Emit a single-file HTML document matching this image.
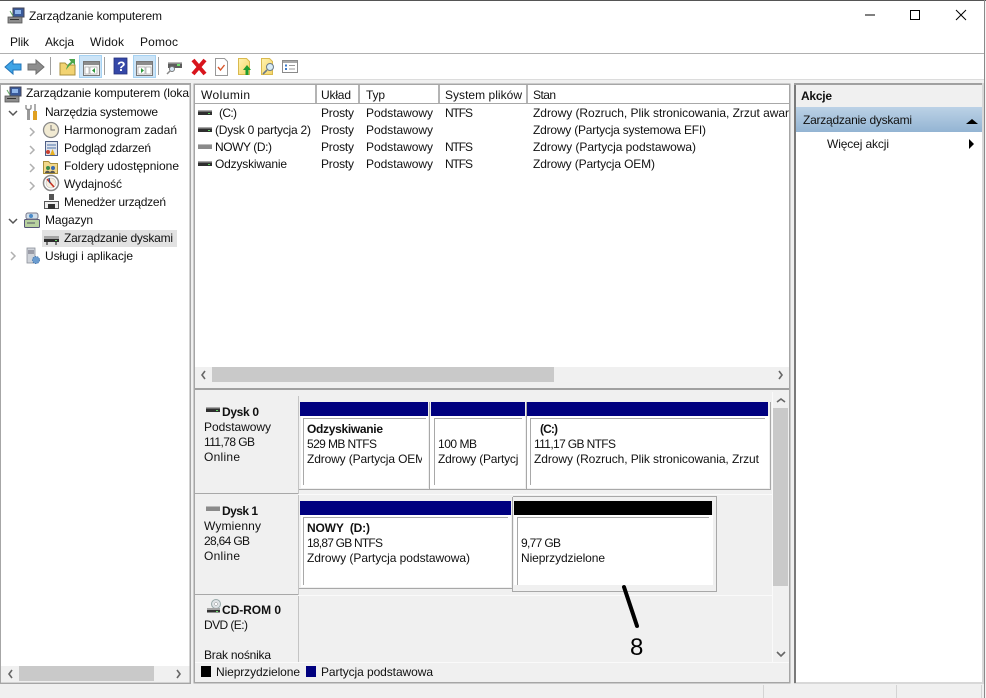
<!DOCTYPE html>
<html lang="pl"><head><meta charset="utf-8"><title>Zarządzanie komputerem</title>
<style>
html,body{margin:0;padding:0;background:#f0f0f0;width:986px;height:698px;overflow:hidden}
svg{display:block}
text{font-family:"Liberation Sans",sans-serif;font-size:12px;fill:#111;white-space:pre}
.b{font-weight:bold}
</style></head><body>
<svg width="986" height="698" viewBox="0 0 986 698" xmlns="http://www.w3.org/2000/svg">
<defs>
<linearGradient id="band" x1="0" y1="0" x2="0" y2="1"><stop offset="0" stop-color="#bcd2e6"/><stop offset="1" stop-color="#93b4d3"/></linearGradient>
<linearGradient id="yel" x1="0" y1="0" x2="1" y2="1"><stop offset="0" stop-color="#fff3b0"/><stop offset="1" stop-color="#f5d468"/></linearGradient>
<clipPath id="c1"><rect x="300" y="440" width="122" height="40"/></clipPath>
<clipPath id="c2"><rect x="432" y="440" width="86" height="40"/></clipPath>
<clipPath id="c3"><rect x="530" y="100" width="259" height="30"/></clipPath>
<g id="disk"><rect x="0" y="0" width="14" height="1.500" fill="#a8a8a8"/><rect x="0" y="1.500" width="14" height="3.500" fill="#2e2e2e"/><rect x="10" y="3" width="2" height="1" fill="#5fd35f"/></g>
<g id="diskg"><rect x="0" y="0" width="14" height="5" fill="#8a8a8a"/><rect x="0" y="0" width="14" height="1" fill="#bbb"/></g>
<g id="comp"><rect x="5" y="0" width="11" height="9" fill="#3a5a9a" stroke="#445"/><rect x="7" y="2" width="6" height="4" fill="#8fb6ea"/><rect x="0" y="9" width="14" height="6" fill="#8d8d8d" stroke="#555" stroke-width=".8"/><rect x="2" y="11" width="9" height="1" fill="#333"/><path d="M2 3l3 5" stroke="#6a6" stroke-width="1"/></g>
<g id="win"><rect x="0.5" y="0.5" width="16" height="14" fill="#f4f4f4" stroke="#777"/><rect x="1" y="1" width="15" height="3" fill="#8c8c8c"/></g>
</defs>

<!-- window -->
<rect x="0" y="0" width="986" height="698" fill="#f0f0f0"/>
<rect x="0" y="0" width="984" height="80" fill="#fff"/>
<rect x="0" y="0" width="986" height="1" fill="#555"/>
<rect x="984" y="0" width="1" height="698" fill="#8a8a8a"/>
<rect x="985" y="1" width="1" height="697" fill="#f4f4f4"/>
<rect x="0" y="53" width="984" height="1" fill="#b0b0b0"/>
<rect x="0" y="79" width="984" height="1" fill="#dcdcdc"/>

<!-- title -->
<use href="#comp" x="8" y="8"/>
<text x="29" y="20" textLength="133">Zarządzanie komputerem</text>
<path d="M865 15h10" stroke="#000" stroke-width="1"/>
<rect x="910.5" y="10.5" width="9" height="9" fill="none" stroke="#000"/>
<path d="M956 10l10 10M966 10l-10 10" stroke="#000" stroke-width="1"/>

<!-- menu -->
<text x="10" y="46" textLength="19">Plik</text>
<text x="45" y="46" textLength="29">Akcja</text>
<text x="90" y="46" textLength="34">Widok</text>
<text x="140" y="46" textLength="38">Pomoc</text>

<!-- toolbar -->
<path d="M5 67l8-7v4h8v6h-8v4z" fill="#3fa4e6" stroke="#2274b8"/>
<path d="M44 67l-8-7v4h-8v6h8v4z" fill="#8e8e8e" stroke="#6f6f6f"/>
<rect x="50" y="57" width="1" height="18" fill="#a0a0a0"/>
<path d="M60 63h5l2 2h8v10H60z" fill="#f2d372" stroke="#a98f3c"/>
<path d="M66 70c1-5 3-7 5-8l-2-3 6 0 0 6-2-2c-2 1-4 3-7 7z" fill="#4ca64c"/>
<rect x="79.500" y="55.500" width="22" height="22" fill="#cce4f7" stroke="#a6d2f2"/>
<use href="#win" x="83" y="61"/>
<rect x="85" y="67" width="4" height="7" fill="#fff" stroke="#999" stroke-width=".6"/><rect x="90" y="67" width="7" height="7" fill="#fff" stroke="#999" stroke-width=".6"/>
<path d="M95 68l-3 2.500 3 2.500z" fill="#2d9a3c"/>
<rect x="104" y="57" width="1" height="18" fill="#a0a0a0"/>
<rect x="114" y="58" width="13" height="16" fill="#3548a8" stroke="#25307a" stroke-width=".8"/>
<text x="117" y="71" class="b" style="font-size:14px;fill:#fff">?</text>
<rect x="133.500" y="55.500" width="22" height="22" fill="#cce4f7" stroke="#a6d2f2"/>
<use href="#win" x="136" y="61"/>
<rect x="138" y="67" width="7" height="7" fill="#fff" stroke="#999" stroke-width=".6"/><rect x="146" y="67" width="5" height="7" fill="#fff" stroke="#999" stroke-width=".6"/>
<path d="M141 68l3 2.500-3 2.500z" fill="#2d9a3c"/>
<rect x="158" y="57" width="1" height="18" fill="#a0a0a0"/>
<rect x="168" y="62" width="14" height="6" fill="#5d5d5d"/><rect x="168" y="62" width="14" height="1.500" fill="#b8b8b8"/><rect x="177" y="64" width="3" height="2" fill="#6fe06f"/>
<circle cx="172" cy="69" r="2.500" fill="#d8e8f5" stroke="#777"/><path d="M170 71l-3 3" stroke="#888" stroke-width="1.500"/>
<path d="M193 60l12 14M205 60l-12 14" stroke="#d8141c" stroke-width="4"/>
<path d="M215.500 58.500h9l3 3v14h-12z" fill="#fff" stroke="#999"/>
<path d="M218 67l2.500 3 4-5" fill="none" stroke="#d8552a" stroke-width="1.400"/>
<path d="M238.500 58.500h8l3 3v13h-11z" fill="url(#yel)" stroke="#d9b94e"/>
<path d="M247 65l4 5h-2.500v5h-3v-5H243z" fill="#1f9c2f"/>
<path d="M261.500 58.500h8l3 3v13h-11z" fill="url(#yel)" stroke="#d9b94e"/>
<circle cx="270" cy="67" r="3.500" fill="#d8ecf8" stroke="#6b7b88"/><path d="M267 70l-4 4" stroke="#6b7b88" stroke-width="1.600"/>
<rect x="282.500" y="60.500" width="15" height="12" fill="#fff" stroke="#8a8a8a"/><rect x="283" y="61" width="14" height="2" fill="#aaa"/>
<path d="M285 65.500h2M285 69h2" stroke="#3a78c8" stroke-width="2"/><path d="M289 65.500h6M289 69h6" stroke="#999"/>

<!-- left panel -->
<rect x="0" y="83" width="191" height="601" fill="#a6a6a6"/>
<rect x="1" y="85" width="188.500" height="597.500" fill="#fff"/>
<rect x="1" y="666" width="188.500" height="16" fill="#f0f0f0"/>
<rect x="19" y="666" width="135" height="15" fill="#c9c9c9"/>
<path d="M12 670l-3 4 3 4M177 670l3 4-3 4" fill="none" stroke="#666" stroke-width="1.600"/>
<rect x="42" y="230" width="135" height="17" fill="#e2e2e2"/>

<use href="#comp" x="5" y="87"/>
<text x="26" y="97" textLength="163">Zarządzanie komputerem (loka</text>
<path d="M9 111l4 4 4-4" fill="none" stroke="#555" stroke-width="1.500"/>
<path d="M28.500 109v11" stroke="#999" stroke-width="3"/><path d="M26 105v3c0 2 5 2 5 0v-3" fill="none" stroke="#888" stroke-width="1.300"/><path d="M35 104v7" stroke="#999" stroke-width="1.600"/><path d="M35 111v9" stroke="#e0a020" stroke-width="4"/>
<text x="45" y="116" textLength="113">Narzędzia systemowe</text>

<g fill="none" stroke="#b0b0b0" stroke-width="1.500"><path d="M30 128l4 4-4 4M30 146l4 4-4 4M30 164l4 4-4 4M30 182l4 4-4 4"/></g>
<circle cx="51" cy="130" r="7.500" fill="#f1ead2" stroke="#8a8a8a" stroke-width="1.300"/><path d="M51 125v5h4" fill="none" stroke="#777"/>
<text x="64" y="134" textLength="113">Harmonogram zadań</text>
<rect x="45.500" y="141.500" width="12" height="14" fill="#dfe4ee" stroke="#4f5f85"/><path d="M47 145h9M47 148h9" stroke="#4f74a8"/><path d="M50 155l2.500-6 2.500 6z" fill="#e8b020"/><circle cx="48" cy="152" r="2" fill="#c84030"/>
<text x="64" y="152" textLength="87">Podgląd zdarzeń</text>
<path d="M43.500 161.500h5l2 2h7v10h-14z" fill="#f2d88a" stroke="#a98f3c"/><circle cx="48" cy="168" r="2" fill="#3a8a4a"/><circle cx="53" cy="168" r="2" fill="#3a6ab0"/><path d="M45 173c0-3 5-3 5 0zM50 173c0-3 5-3 5 0z" fill="#555"/>
<text x="64" y="170" textLength="115">Foldery udostępnione</text>
<circle cx="51" cy="183" r="7.500" fill="#fff" stroke="#8a8a8a" stroke-width="1.500"/><circle cx="51" cy="183" r="5" fill="#f6efe0" stroke="#bbb" stroke-width=".6"/><path d="M47 179l7 8" stroke="#c83020" stroke-width="1.600"/><path d="M49 178l1 5" stroke="#234a8a" stroke-width="1.200"/>
<text x="64" y="188" textLength="58">Wydajność</text>
<rect x="49" y="194" width="5" height="6" fill="#555"/><path d="M44.500 208.500v-7h14v7z" fill="#eee" stroke="#555"/><rect x="48" y="204" width="7" height="5" fill="#333"/>
<text x="64" y="206" textLength="102">Menedżer urządzeń</text>
<path d="M9 219l4 4 4-4" fill="none" stroke="#555" stroke-width="1.500"/>
<rect x="24.500" y="219.500" width="15" height="8" rx="1" fill="#b8d2a0" stroke="#557"/><rect x="26" y="213" width="12" height="6" rx="2" fill="#d0dfec" stroke="#778"/><circle cx="31" cy="216" r="2" fill="#4a8ac8"/><path d="M27 223h8" stroke="#556"/>
<text x="45" y="224" textLength="48">Magazyn</text>
<rect x="44" y="236" width="15" height="3" fill="#a5a5a5"/><rect x="44" y="239" width="15" height="3" fill="#2d2d2d"/><rect x="46" y="242" width="2" height="3" fill="#777"/><rect x="55" y="242" width="2" height="3" fill="#777"/><rect x="55" y="240" width="2" height="1" fill="#6fe06f"/>
<text x="64" y="242" textLength="109">Zarządzanie dyskami</text>
<path d="M11 252l4 4-4 4" fill="none" stroke="#b0b0b0" stroke-width="1.500"/>
<rect x="27" y="248" width="8" height="15" fill="#d0d4da" stroke="#8a8f98" stroke-width=".8"/><path d="M28 251h6M28 253h6" stroke="#667"/><circle cx="36" cy="260" r="3.500" fill="#6a9cd0" stroke="#4a7ab0" stroke-dasharray="1.500 1"/>
<text x="45" y="260" textLength="88">Usługi i aplikacje</text>

<!-- middle panel -->
<rect x="193.500" y="83.500" width="597" height="600" fill="#a6a6a6"/>
<rect x="195" y="85" width="594" height="282" fill="#fff"/>
<rect x="195" y="103" width="594" height="1" fill="#a8a8a8"/>
<g fill="#b4b4b4"><rect x="315" y="85" width="2" height="18"/><rect x="358" y="85" width="2" height="18"/><rect x="438" y="85" width="2" height="18"/><rect x="526" y="85" width="2" height="18"/></g>
<text x="201" y="99" textLength="49">Wolumin</text>
<text x="321" y="99" textLength="30">Układ</text>
<text x="366" y="99" textLength="19">Typ</text>
<text x="445" y="99" textLength="77">System plików</text>
<text x="533" y="99" textLength="23">Stan</text>

<use href="#disk" x="198" y="110"/>
<text x="219" y="117" textLength="18">(C:)</text>
<text x="321" y="117" textLength="33">Prosty</text><text x="366" y="117" textLength="67">Podstawowy</text><text x="445" y="117" textLength="28">NTFS</text>
<text x="533" y="117" textLength="262" clip-path="url(#c3)">Zdrowy (Rozruch, Plik stronicowania, Zrzut awary</text>
<use href="#disk" x="198" y="127"/>
<text x="215" y="134" textLength="96">(Dysk 0 partycja 2)</text>
<text x="321" y="134" textLength="33">Prosty</text><text x="366" y="134" textLength="67">Podstawowy</text>
<text x="533" y="134" textLength="173">Zdrowy (Partycja systemowa EFI)</text>
<use href="#diskg" x="198" y="144"/>
<text x="215" y="151" textLength="57">NOWY (D:)</text>
<text x="321" y="151" textLength="33">Prosty</text><text x="366" y="151" textLength="67">Podstawowy</text><text x="445" y="151" textLength="28">NTFS</text>
<text x="533" y="151" textLength="163">Zdrowy (Partycja podstawowa)</text>
<use href="#disk" x="198" y="161"/>
<text x="215" y="168" textLength="72">Odzyskiwanie</text>
<text x="321" y="168" textLength="33">Prosty</text><text x="366" y="168" textLength="67">Podstawowy</text><text x="445" y="168" textLength="28">NTFS</text>
<text x="533" y="168" textLength="122">Zdrowy (Partycja OEM)</text>

<rect x="195" y="367" width="594" height="16" fill="#f0f0f0"/>
<rect x="212" y="367" width="342" height="15" fill="#c9c9c9"/>
<path d="M205 371l-3 4 3 4M779 371l3 4-3 4" fill="none" stroke="#666" stroke-width="1.600"/>
<rect x="195" y="383" width="594" height="5" fill="#f0f0f0"/>
<rect x="195" y="388" width="594" height="2" fill="#a0a0a0"/>

<!-- graphical -->
<rect x="195" y="390" width="594" height="292" fill="#f0f0f0"/>
<rect x="298" y="396" width="1" height="266" fill="#c4c4c4"/>
<rect x="195" y="493" width="103" height="1" fill="#a8a8a8"/>
<rect x="298" y="494" width="474" height="1" fill="#fafafa"/>
<rect x="195" y="594" width="103" height="1" fill="#a8a8a8"/>
<rect x="298" y="595" width="474" height="1" fill="#fafafa"/>
<rect x="772" y="392" width="1" height="270" fill="#fafafa"/>

<!-- Disk 0 -->
<rect x="299" y="489" width="472" height="1" fill="#a8a8a8"/>
<rect x="770" y="402" width="1" height="88" fill="#a8a8a8"/>
<rect x="300" y="402" width="128" height="14" fill="#00007f"/>
<rect x="431" y="402" width="94" height="14" fill="#00007f"/>
<rect x="527" y="402" width="241" height="14" fill="#00007f"/>
<rect x="301" y="416" width="127" height="72" fill="#fff"/>
<rect x="430" y="416" width="95" height="72" fill="#fff"/>
<rect x="527" y="416" width="242" height="72" fill="#fff"/>
<rect x="429" y="402" width="1" height="87" fill="#a8a8a8"/>
<rect x="526" y="402" width="1" height="87" fill="#a8a8a8"/>
<path d="M303.500 485V418.500H426M434.500 485V418.500H522M530.500 485V418.500H765" fill="none" stroke="#a8a8a8"/>
<use href="#disk" x="206" y="407"/>
<text x="222" y="416" class="b" textLength="37">Dysk 0</text>
<text x="204" y="431" textLength="67">Podstawowy</text>
<text x="204" y="446" textLength="51">111,78 GB</text>
<text x="204" y="461" textLength="36">Online</text>
<text x="307" y="433" class="b" textLength="76">Odzyskiwanie</text>
<text x="307" y="448" textLength="70">529 MB NTFS</text>
<text x="307" y="463" textLength="122" clip-path="url(#c1)">Zdrowy (Partycja OEM)</text>
<text x="438" y="448" textLength="39">100 MB</text>
<text x="438" y="463" textLength="173" clip-path="url(#c2)">Zdrowy (Partycja systemowa EFI)</text>
<text x="540" y="433" class="b" textLength="18">(C:)</text>
<text x="534" y="448" textLength="82">111,17 GB NTFS</text>
<text x="534" y="463" textLength="225">Zdrowy (Rozruch, Plik stronicowania, Zrzut</text>

<!-- Disk 1 -->
<path d="M513 496.500H716.500V591.500H513" fill="#f0f0f0" stroke="#a8a8a8"/>
<rect x="299" y="588" width="214" height="1" fill="#a8a8a8"/>
<rect x="300" y="501" width="211" height="14" fill="#00007f"/>
<rect x="514" y="501" width="198" height="14" fill="#000"/>
<rect x="301" y="515" width="210" height="72" fill="#fff"/>
<rect x="514" y="515" width="199" height="70" fill="#fff"/>
<rect x="512" y="497" width="1" height="95" fill="#a8a8a8"/>
<path d="M303.500 585V517.500H508M517.500 585V517.500H709" fill="none" stroke="#a8a8a8"/>
<use href="#diskg" x="206" y="506"/>
<text x="222" y="515" class="b" textLength="36">Dysk 1</text>
<text x="204" y="530" textLength="57">Wymienny</text>
<text x="204" y="545" textLength="46">28,64 GB</text>
<text x="204" y="560" textLength="36">Online</text>
<text x="307" y="532" class="b" textLength="63">NOWY  (D:)</text>
<text x="307" y="547" textLength="76">18,87 GB NTFS</text>
<text x="307" y="562" textLength="163">Zdrowy (Partycja podstawowa)</text>
<text x="521" y="547" textLength="40">9,77 GB</text>
<text x="521" y="562" textLength="84">Nieprzydzielone</text>

<!-- CD -->
<circle cx="216" cy="604" r="4.500" fill="#dfe3e6" stroke="#9aa"/><circle cx="216" cy="604" r="1.500" fill="#fff" stroke="#999" stroke-width=".5"/>
<rect x="207" y="608" width="13" height="2" fill="#a5a5a5"/><rect x="207" y="610" width="13" height="2.500" fill="#333"/><rect x="216" y="611" width="2" height="1" fill="#6fe06f"/>
<text x="222" y="614" class="b" textLength="59">CD-ROM 0</text>
<text x="204" y="629" textLength="44">DVD (E:)</text>
<text x="204" y="659" textLength="67">Brak nośnika</text>

<!-- v scrollbar -->
<rect x="773" y="392" width="16" height="270" fill="#f0f0f0"/>
<rect x="773" y="408" width="15" height="178" fill="#c9c9c9"/>
<path d="M777 402l4-3 4 3M777 652l4 4 4-4" fill="none" stroke="#666" stroke-width="1.600"/>

<!-- legend -->
<rect x="195" y="662" width="594" height="1" fill="#fafafa"/>
<rect x="201" y="666" width="10" height="11" fill="#000"/>
<text x="216" y="676" textLength="84">Nieprzydzielone</text>
<rect x="306" y="666" width="10" height="11" fill="#00007f"/>
<text x="321" y="676" textLength="112">Partycja podstawowa</text>

<!-- annotation -->
<path d="M624 587L637 626" stroke="#000" stroke-width="4" stroke-linecap="round"/>
<text x="630" y="655" style="font-size:24px;fill:#000" textLength="14">8</text>

<!-- actions -->
<rect x="794" y="83" width="190" height="601" fill="#d8d8d8"/>
<rect x="794" y="83" width="2" height="600" fill="#7a7a7a"/>
<rect x="794" y="83" width="188" height="2" fill="#a0a0a0"/>
<rect x="796" y="85" width="186" height="597" fill="#fff"/>
<rect x="796" y="85" width="186" height="22" fill="#f0f0f0"/>
<text x="801" y="100" class="b" textLength="31">Akcje</text>
<rect x="796" y="107" width="186" height="25" fill="url(#band)"/>
<text x="803" y="124" textLength="109">Zarządzanie dyskami</text>
<path d="M966 124l6-5 6 5z" fill="#000"/>
<text x="827" y="148" textLength="62">Więcej akcji</text>
<path d="M969 139l5 5-5 5z" fill="#000"/>

<!-- status bar -->
<rect x="0" y="684" width="984" height="14" fill="#f0f0f0"/>
<rect x="763" y="685" width="1" height="13" fill="#d4d4d4"/>
<rect x="896" y="685" width="1" height="13" fill="#d4d4d4"/>
<rect x="981" y="685" width="1" height="13" fill="#d4d4d4"/>
</svg>
</body></html>
